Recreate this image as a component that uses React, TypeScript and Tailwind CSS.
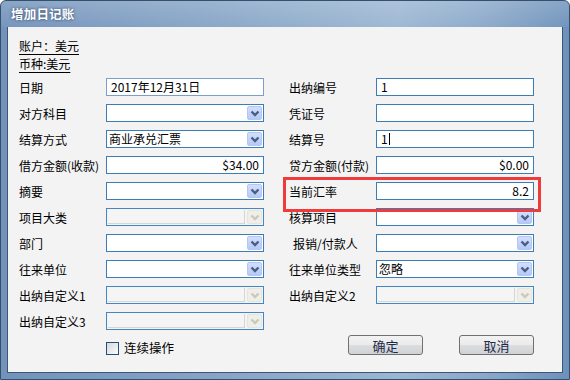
import React from "react";

const Chevron = ({ color }: { color: string }) => (
  <svg width="10" height="7" viewBox="0 0 10 7">
    <polyline points="1.5,1.5 5,5 8.5,1.5" fill="none" stroke={color} strokeWidth="2.4" />
  </svg>
);

const DropButton = ({ disabled }: { disabled?: boolean }) =>
  disabled ? (
    <span className="flex w-[15px] self-stretch my-px mr-px items-center justify-center rounded-[2px] bg-[#efeee8] border border-[#e6e5dd]">
      <Chevron color="#cbc9bc" />
    </span>
  ) : (
    <span className="flex w-[15px] self-stretch my-px mr-px items-center justify-center rounded-[2px] bg-gradient-to-b from-[#d3defc] to-[#b5c9f6] border border-[#b4c6f2]">
      <Chevron color="#4a5d82" />
    </span>
  );

type FieldProps = {
  kind: "text" | "combo" | "disabled";
  value?: string;
  right?: boolean;
  light?: boolean;
  caret?: boolean;
};

const Field = ({ kind, value, right, light, caret }: FieldProps) => {
  if (kind === "text") {
    return (
      <div
        className={`h-[18px] w-[158px] border bg-white flex items-center px-[4px] text-[12px] leading-none ${
          light ? "border-[#7f9dcc]" : "border-[#3c7db6]"
        } ${right ? "justify-end" : "justify-start"}`}
      >
        <span>{value}</span>
        {caret && <span className="ml-px h-[12px] w-px bg-black" />}
      </div>
    );
  }
  if (kind === "disabled") {
    return (
      <div className="h-[18px] w-[158px] border border-[#4486c2] bg-[#f4f4f4] flex">
        <span className="flex-1 my-px ml-px mr-[2px] border-r border-b border-[#d6d6d6] bg-[#f5f5f5]" />
        <DropButton disabled />
      </div>
    );
  }
  return (
    <div className="h-[18px] w-[158px] border border-[#3c7db6] bg-white flex items-center">
      <span className="flex-1 pl-[2px] text-[12px] leading-none">{value}</span>
      <DropButton />
    </div>
  );
};

const Row = ({ label, indent, children }: { label: string; indent?: boolean; children: React.ReactNode }) => (
  <div className="flex items-center h-[18px]">
    <span className={`w-[87px] pt-[2px] text-[12px] leading-none whitespace-nowrap ${indent ? "pl-[4px]" : ""}`}>
      {label}
    </span>
    {children}
  </div>
);

const Button = ({ label }: { label: string }) => (
  <button className="w-[75px] h-[20px] rounded-[3px] border border-[#707070] bg-[linear-gradient(to_bottom,#f2f2f2_0%,#ebebeb_50%,#dddddd_51%,#cfd2d6_100%)] text-[13px] leading-none text-[#1b2a4a] flex items-center justify-center">
    {label}
  </button>
);

export default function App() {
  const left: { label: string; field: FieldProps }[] = [
    { label: "日期", field: { kind: "text", value: "2017年12月31日", light: true } },
    { label: "对方科目", field: { kind: "combo" } },
    { label: "结算方式", field: { kind: "combo", value: "商业承兑汇票" } },
    { label: "借方金额(收款)", field: { kind: "text", value: "$34.00", right: true } },
    { label: "摘要", field: { kind: "combo" } },
    { label: "项目大类", field: { kind: "disabled" } },
    { label: "部门", field: { kind: "combo" } },
    { label: "往来单位", field: { kind: "combo" } },
    { label: "出纳自定义1", field: { kind: "disabled" } },
    { label: "出纳自定义3", field: { kind: "disabled" } },
  ];

  const right: { label: string; indent?: boolean; field: FieldProps }[] = [
    { label: "出纳编号", field: { kind: "text", value: "1" } },
    { label: "凭证号", field: { kind: "text" } },
    { label: "结算号", field: { kind: "text", value: "1", caret: true } },
    { label: "贷方金额(付款)", field: { kind: "text", value: "$0.00", right: true } },
    { label: "当前汇率", field: { kind: "text", value: "8.2", right: true } },
    { label: "核算项目", field: { kind: "combo" } },
    { label: "报销/付款人", indent: true, field: { kind: "combo" } },
    { label: "往来单位类型", field: { kind: "combo", value: "忽略" } },
    { label: "出纳自定义2", field: { kind: "disabled" } },
  ];

  return (
    <div className="relative w-[570px] h-[380px] flex flex-col border border-[#34506f] rounded-t-[6px] bg-[linear-gradient(to_right,#7292ba_0%,#84a3c5_35%,#9bb6d2_70%,#8aa8c9_85%,#6d91ba_100%)] font-['Noto_Sans_CJK_SC','Liberation_Sans',sans-serif] text-black overflow-hidden">
      {/* title bar */}
      <div className="h-[26px] flex items-center pl-[10px] bg-[linear-gradient(to_bottom,rgba(255,255,255,0.18),rgba(255,255,255,0.04))]">
        <span className="text-white text-[12.5px] font-bold tracking-[0.2px] [text-shadow:0_0_3px_rgba(20,40,70,0.8)]">
          增加日记账
        </span>
      </div>

      {/* client */}
      <div className="flex-1 mx-[6px] mb-[6px] border-x border-b border-[#3b5679] bg-[#f3f3f3] pl-[11px] pt-[9px]">
        <div className="text-[12px] leading-[19px]">
          <div className="h-[18px]">
            <span className="underline underline-offset-[3px]">账户：美元</span>
          </div>
          <div className="h-[18px]">
            <span className="underline underline-offset-[3px]">币种:美元</span>
          </div>
        </div>

        <div className="mt-[6px] flex gap-[25px]">
          <div className="flex flex-col gap-[8px]">
            {left.map((r) => (
              <Row key={r.label} label={r.label}>
                <Field {...r.field} />
              </Row>
            ))}
            <div className="flex items-center h-[13px] pl-[87px] mt-[4px]">
              <span className="w-[13px] h-[13px] border border-[#1c5180] bg-gradient-to-br from-[#d8d8d8] to-[#fbfbfb]" />
              <span className="ml-[5px] text-[12.5px] leading-none">连续操作</span>
            </div>
          </div>

          <div className="flex flex-col gap-[8px]">
            {right.map((r) => (
              <Row key={r.label} label={r.label} indent={r.indent}>
                <Field {...r.field} />
              </Row>
            ))}
            <div className="mt-[23px] flex justify-end gap-[36px]">
              <Button label="确定" />
              <Button label="取消" />
            </div>
          </div>
        </div>
      </div>

      {/* annotation */}
      <div className="absolute left-[282px] top-[176px] w-[258px] h-[35px] border-[3px] border-[#ef3b3b]" />
    </div>
  );
}
